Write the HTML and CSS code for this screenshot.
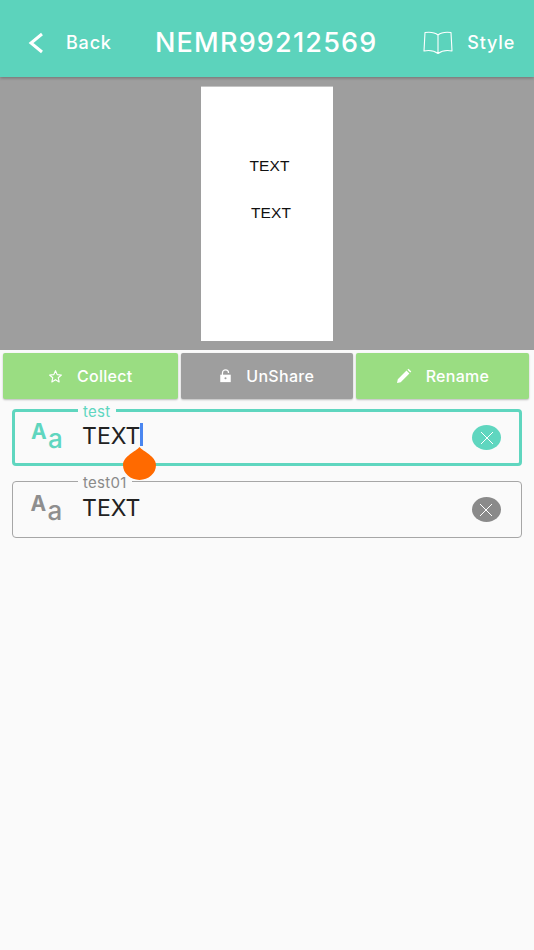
FILE: index.html
```html
<!DOCTYPE html>
<html lang="en">
<head>
<meta charset="utf-8">
<title>NEMR99212569</title>
<link rel="stylesheet" href="styles.css">
</head>
<body>
<div class="app">
  <header class="topbar">
    <div class="nav-left">
      <svg class="chev" viewBox="0 0 16 22" width="16" height="22"><path d="M14 2 L3 11 L14 20" fill="none" stroke="#fff" stroke-width="3"/></svg>
      <span class="nav-label">Back</span>
    </div>
    <h1 class="title">NEMR99212569</h1>
    <div class="nav-right">
      <svg class="book" viewBox="0 0 30 24" width="30" height="24"><path d="M15 4 C12 1.500 6 1 2 1.500 L1 20 C6 19 11 19.500 15 22.500 C19 19.500 24 19 29 20 L28 1.500 C24 1 18 1.500 15 4 Z M15 4 V22.500" fill="none" stroke="#fff" stroke-width="1.100" stroke-linejoin="round"/></svg>
      <span class="nav-label">Style</span>
    </div>
  </header>

  <section class="preview">
    <div class="sheet">
      <span class="sheet-text sheet-text-a">TEXT</span>
      <span class="sheet-text sheet-text-b">TEXT</span>
    </div>
  </section>

  <div class="actions">
    <button class="action green collect">
      <svg viewBox="0 0 16 16" width="15" height="15"><path d="M8 1.800 L9.800 6 L14.300 6.400 L10.900 9.300 L11.900 13.800 L8 11.400 L4.100 13.800 L5.100 9.300 L1.700 6.400 L6.200 6 Z" fill="none" stroke="#fff" stroke-width="1.200" stroke-linejoin="round"/></svg>
      <span>Collect</span>
    </button>
    <button class="action gray unshare">
      <svg viewBox="0 0 14 16" width="13" height="14"><path d="M3.500 7 V4.500 A3.500 3.500 0 0 1 10.500 4.500" fill="none" stroke="#fff" stroke-width="1.400"/><path d="M1 6.500 H13 V15 H1 Z" fill="#fff"/><circle cx="7" cy="10.500" r="1.200" fill="#9e9e9e"/></svg>
      <span>UnShare</span>
    </button>
    <button class="action green rename">
      <svg viewBox="0 0 16 16" width="16" height="16"><path d="M1 15 L1.800 11.300 L10.500 2.600 L13.400 5.500 L4.700 14.200 Z M11.400 1.700 L12.500 0.700 L15.300 3.500 L14.300 4.600 Z" fill="#fff"/></svg>
      <span>Rename</span>
    </button>
  </div>

  <div class="fields">
    <div class="field active">
      <span class="legend">test</span>
      <span class="aa"><span class="aa-big">A</span><span class="aa-small">a</span></span>
      <span class="value">TEXT<i class="caret"></i></span>
      <span class="clear"><svg viewBox="0 0 16 16" width="16" height="16"><path d="M2 2 L14 14 M14 2 L2 14" stroke="#fff" stroke-width="1"/></svg></span>
      <svg class="handle" viewBox="0 0 33 33" width="33" height="33"><path d="M16.500 0 C20 4.500 33 9 33 18 A16.500 15 0 0 1 0 18 C0 9 13 4.500 16.500 0 Z" fill="#ff6a00"/></svg>
    </div>
    <div class="field">
      <span class="legend">test01</span>
      <span class="aa"><span class="aa-big">A</span><span class="aa-small">a</span></span>
      <span class="value">TEXT</span>
      <span class="clear"><svg viewBox="0 0 16 16" width="16" height="16"><path d="M2 2 L14 14 M14 2 L2 14" stroke="#fff" stroke-width="1"/></svg></span>
    </div>
  </div>
</div>
</body>
</html>
```
FILE: styles.css
```css
* { box-sizing: border-box; }
html, body { margin: 0; padding: 0; }
body { width: 534px; height: 950px; background: #fafafa; font-family: "Inter", "Liberation Sans", sans-serif; overflow: hidden; }
.app { display: flex; flex-direction: column; height: 950px; }

.topbar { position: relative; z-index: 2; height: 77px; flex: none; background: #5cd3bc; color: #fff; display: flex; align-items: center; padding: 8px 19px 0 28px; box-shadow: 0 1px 3px rgba(0,0,0,.28); }
.nav-left { display: flex; align-items: center; gap: 22px; width: 127px; }
.nav-right { display: flex; align-items: center; gap: 14px; margin-left: auto; }
.nav-label { font-size: 18px; font-weight: 500; letter-spacing: .8px; }
.title { margin: 0; font-size: 27px; font-weight: 500; letter-spacing: 1.200px; white-space: nowrap; }
.chev, .book { display: block; }

.preview { height: 273px; flex: none; background: #9e9e9e; display: flex; justify-content: center; padding-top: 9px; }
.sheet { position: relative; width: 132px; height: 255px; background: #fff; border-top: 1px solid #c4c4c4; }
.sheet-text { position: absolute; font-family: "Liberation Sans", sans-serif; font-size: 15.500px; color: #111; letter-spacing: .1px; line-height: 18px; }
.sheet-text-a { left: 48.500px; top: 70px; }
.sheet-text-b { left: 50px; top: 117px; }

.actions { display: flex; gap: 3px; padding: 3px 4px 0 3px; height: 49px; flex: none; }
.action { height: 46px; border: 0; border-radius: 2px; color: #fff; font-family: inherit; font-size: 16px; font-weight: 500; letter-spacing: .3px; display: flex; align-items: center; justify-content: center; gap: 14px; padding: 0; box-shadow: 0 1px 2px rgba(0,0,0,.25); }
.action svg { display: block; }
.green { background: #9add82; }
.gray { background: #9e9e9e; }
.collect { width: 174.500px; }
.unshare { width: 172.500px; }
.rename { width: 173px; }

.fields { display: flex; flex-direction: column; gap: 15px; padding: 10px 12px 0; }
.field { position: relative; height: 57px; border: 1.500px solid #a6a6a6; border-radius: 4px; display: flex; align-items: center; padding: 0 20.500px 0 18.500px; }
.field.active { z-index: 1; border: 3px solid #5fd6bf; padding-left: 17px; padding-right: 18px; }
.legend { position: absolute; left: 65px; top: -7px; padding: 0 5px; background: #fafafa; font-size: 15px; line-height: 16px; color: #8a8a8a; letter-spacing: .3px; }
.active .legend { left: 63px; top: -8px; color: #5fd6bf; }
.aa { display: block; position: relative; flex: none; width: 30px; height: 26px; color: #8e8e8e; font-weight: 700; }
.active .aa { color: #5fd6bf; }
.aa-big { position: absolute; left: -1px; top: -3px; font-size: 21px; line-height: 20px; }
.aa-small { position: absolute; left: 16px; top: 0; font-size: 26px; line-height: 28px; font-weight: 500; }
.value { position: relative; margin-left: 20.500px; margin-top: -3px; font-size: 23px; color: #222; line-height: 28px; letter-spacing: .05px; }
.active .value { margin-left: 20px; }
.caret { position: absolute; left: calc(100% - 1px); top: 1px; width: 3px; height: 23px; background: #4a86f0; }
.clear { margin-left: auto; width: 29px; height: 25px; border-radius: 50%; background: #8a8a8a; display: flex; align-items: center; justify-content: center; }
.active .clear { background: #5fd6bf; }
.handle { position: absolute; left: 108px; top: 35px; z-index: 3; display: block; }
```
